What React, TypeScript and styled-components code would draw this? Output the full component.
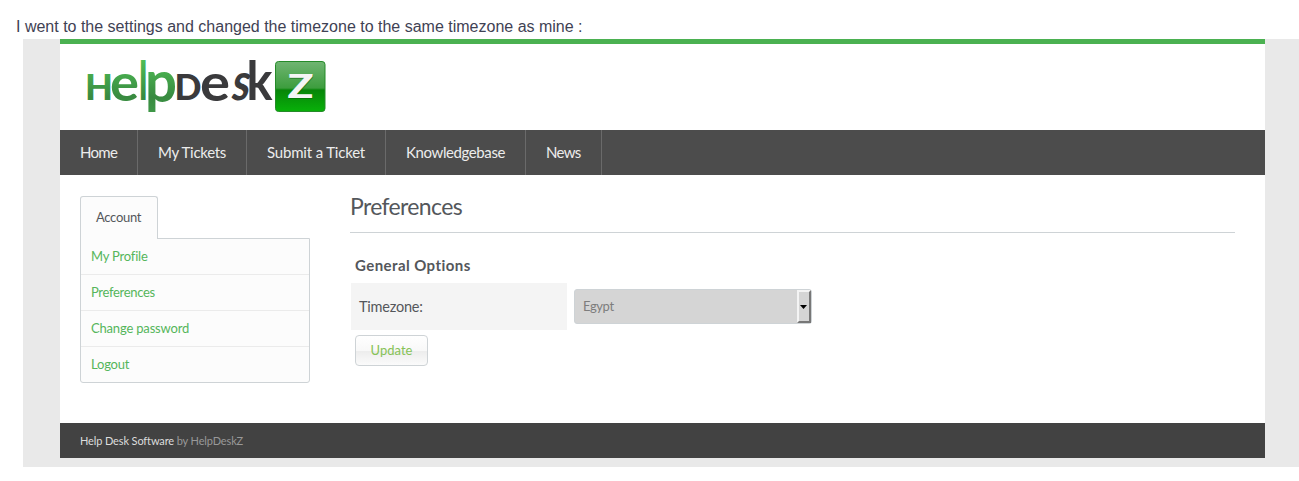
import React from "react";
import styled, { createGlobalStyle } from "styled-components";

const GlobalStyle = createGlobalStyle`
  * { box-sizing: border-box; }
  body { margin: 0; background: #fff; color: #54575b; font-family: Lato, sans-serif; }
  a { color: inherit; text-decoration: none; }
`;
const Page = styled.div`
  height: 481px;
  overflow: hidden;
`;
const Caption = styled.p`
  margin: 0;
  height: 39px;
  padding: 17px 0 0 16px;
  font: 16px/20px "Liberation Sans", Arial, sans-serif;
  color: #3f4254;
  white-space: nowrap;
`;
const Backdrop = styled.div`
  margin-left: 23px;
  height: 428px;
  padding: 0 34px 9px 37px;
  background: #e9e9e9;
`;
const Site = styled.div`
  height: 419px;
  display: flex;
  flex-direction: column;
  background: #fff;
  border-top: 5px solid #4bb151;
`;
const Header = styled.header`
  height: 86px;
  padding: 11px 20px;
`;
const LogoMark = styled.svg`
  display: block;
  overflow: visible;
`;
const Nav = styled.nav`
  display: flex;
  height: 45px;
  background: #4c4c4c;
`;
const NavItem = styled.a<{ $width: number; $spacing: number }>`
  width: ${(p) => p.$width}px;
  padding-left: 20px;
  border-right: 1px solid #6a6a6a;
  color: #ececec;
  font-size: 15px;
  line-height: 45px;
  letter-spacing: ${(p) => p.$spacing}px;
  white-space: nowrap;
`;
const Body = styled.div`
  flex: 1;
  display: flex;
  gap: 40px;
  padding: 21px 30px 0 20px;
`;
const Sidebar = styled.aside`
  width: 230px;
`;
const Tab = styled.div`
  position: relative;
  width: 78px;
  height: 43px;
  padding-left: 15px;
  border: 1px solid #ced3d6;
  border-bottom: 0;
  border-radius: 3px 3px 0 0;
  background: #fcfcfc;
  font-size: 13px;
  line-height: 41px;
  letter-spacing: -0.3px;
`;
const Menu = styled.div`
  margin-top: -1px;
  border: 1px solid #ced3d6;
  border-radius: 0 0 3px 3px;
  background: #fcfcfc;
`;
const MenuItem = styled.a<{ $spacing: number }>`
  display: block;
  height: 35px;
  padding-left: 10px;
  color: #55b65b;
  font-size: 13px;
  line-height: 35px;
  letter-spacing: ${(p) => p.$spacing}px;
  & + & { height: 36px; border-top: 1px solid #ebebeb; }
`;
const Main = styled.main`
  flex: 1;
`;
const Title = styled.h1`
  margin: 0;
  height: 37px;
  border-bottom: 1px solid #ced3d6;
  font-size: 23px;
  font-weight: 400;
  line-height: 21px;
  letter-spacing: -0.65px;
`;
const Subtitle = styled.h2`
  margin: 0;
  padding: 21px 0 0 5px;
  height: 50px;
  font-size: 15px;
  font-weight: 700;
  line-height: 22px;
  letter-spacing: 0.43px;
`;
const Field = styled.div`
  display: flex;
  align-items: center;
  gap: 7px;
  height: 47px;
  padding-left: 1px;
`;
const Label = styled.label`
  width: 216px;
  height: 47px;
  padding-left: 8px;
  background: #f4f4f4;
  font-size: 14.5px;
  line-height: 48px;
  letter-spacing: -0.22px;
`;
const Select = styled.div`
  display: flex;
  width: 238px;
  height: 35px;
  border: 1px solid #ced3d6;
  border-radius: 3px;
  background: #d5d5d5;
  color: #7d7d7d;
`;
const Value = styled.span`
  flex: 1;
  padding-left: 8px;
  font-size: 13px;
  line-height: 33px;
  letter-spacing: -0.4px;
`;
const Arrow = styled.span`
  display: flex;
  align-items: center;
  justify-content: center;
  width: 14px;
  padding-right: 1px;
  border: 2px solid;
  border-color: #f4f4f4 #777 #777 #f4f4f4;
  background: #d5d5d5;
`;
const Button = styled.button`
  display: block;
  width: 73px;
  height: 31px;
  margin: 5px 0 0 5px;
  padding: 0;
  border: 1px solid #ced3d6;
  border-radius: 4px;
  background: linear-gradient(#fff 0%, #f8f8f8 50%, #ececec 51%, #fbfbfb 100%);
  color: #86c256;
  font: 13px/27px Lato, sans-serif;
`;
const Footer = styled.footer`
  height: 35px;
  padding-left: 20px;
  background: #424242;
  color: #999;
  font-size: 11px;
  line-height: 36px;
  letter-spacing: -0.13px;
`;
const FooterLink = styled.a`
  color: #ddd;
`;

const Logo = () => (
  <LogoMark width="250" height="64" viewBox="80 55 250 64" fontFamily="Lato, sans-serif" fontWeight="700">
    <defs>
      <linearGradient id="leaf" gradientUnits="userSpaceOnUse" x1="0" x2="0" y1="60" y2="113">
        <stop offset="0" stopColor="#4fbd55" />
        <stop offset="0.7" stopColor="#388a40" />
        <stop offset="1" stopColor="#3f9848" />
      </linearGradient>
      <linearGradient id="tile" x1="0" x2="0" y1="0" y2="1">
        <stop offset="0" stopColor="#70b572" />
        <stop offset="0.53" stopColor="#3d9d3e" />
        <stop offset="0.57" stopColor="#078509" />
        <stop offset="1" stopColor="#08b109" />
      </linearGradient>
    </defs>
    <g fill="url(#leaf)">
      <text x="85" y="100" fontSize="36" fontWeight="900" textLength="28" lengthAdjust="spacingAndGlyphs">H</text>
      <text x="110" y="100.5" fontSize="52" textLength="29" lengthAdjust="spacingAndGlyphs">e</text>
      <text x="139" y="100" fontSize="54" fontWeight="900" textLength="8.5" lengthAdjust="spacingAndGlyphs">l</text>
      <text x="145" y="102" fontSize="57" textLength="32" lengthAdjust="spacingAndGlyphs">p</text>
    </g>
    <g fill="#3a3a3c">
      <text x="174.5" y="100" fontSize="36" fontWeight="900" textLength="27" lengthAdjust="spacingAndGlyphs">D</text>
      <text x="200" y="100.5" fontSize="52" textLength="30" lengthAdjust="spacingAndGlyphs">e</text>
      <text transform="translate(230 100) skewX(-10)" fontSize="52" textLength="18" lengthAdjust="spacingAndGlyphs">s</text>
      <text x="246.5" y="100" fontSize="54" textLength="26" lengthAdjust="spacingAndGlyphs">k</text>
    </g>
    <rect x="275.5" y="61.5" width="49.5" height="50" rx="3" fill="url(#tile)" stroke="#258b29" />
    <text x="288" y="99" fontSize="32" fontWeight="900" fill="#075c0a" opacity=".5" textLength="26" lengthAdjust="spacingAndGlyphs">Z</text>
    <text x="287.5" y="98" fontSize="32" fontWeight="900" fill="#f5f5f5" textLength="26" lengthAdjust="spacingAndGlyphs">Z</text>
  </LogoMark>
);

const navItems = [
  { label: "Home", width: 78, spacing: -0.7 },
  { label: "My Tickets", width: 109, spacing: -0.3 },
  { label: "Submit a Ticket", width: 139, spacing: -0.18 },
  { label: "Knowledgebase", width: 140, spacing: -0.4 },
  { label: "News", width: 76, spacing: -0.7 },
];
const menuItems = [
  { label: "My Profile", spacing: -0.2 },
  { label: "Preferences", spacing: -0.32 },
  { label: "Change password", spacing: -0.18 },
  { label: "Logout", spacing: -0.2 },
];

export default function App() {
  return (
    <Page>
      <GlobalStyle />
      <Caption>I went to the settings and changed the timezone to the same timezone as mine :</Caption>
      <Backdrop>
        <Site>
          <Header><Logo /></Header>
          <Nav>
            {navItems.map((n) => (
              <NavItem key={n.label} $width={n.width} $spacing={n.spacing}>{n.label}</NavItem>
            ))}
          </Nav>
          <Body>
            <Sidebar>
              <Tab>Account</Tab>
              <Menu>
                {menuItems.map((m) => (
                  <MenuItem key={m.label} $spacing={m.spacing}>{m.label}</MenuItem>
                ))}
              </Menu>
            </Sidebar>
            <Main>
              <Title>Preferences</Title>
              <Subtitle>General Options</Subtitle>
              <Field>
                <Label>Timezone:</Label>
                <Select>
                  <Value>Egypt</Value>
                  <Arrow>
                    <svg width="7" height="4" viewBox="0 0 7 4"><path d="M0 0h7L3.5 4z" fill="#000" /></svg>
                  </Arrow>
                </Select>
              </Field>
              <Button>Update</Button>
            </Main>
          </Body>
          <Footer><FooterLink>Help Desk Software</FooterLink> by HelpDeskZ</Footer>
        </Site>
      </Backdrop>
    </Page>
  );
}
